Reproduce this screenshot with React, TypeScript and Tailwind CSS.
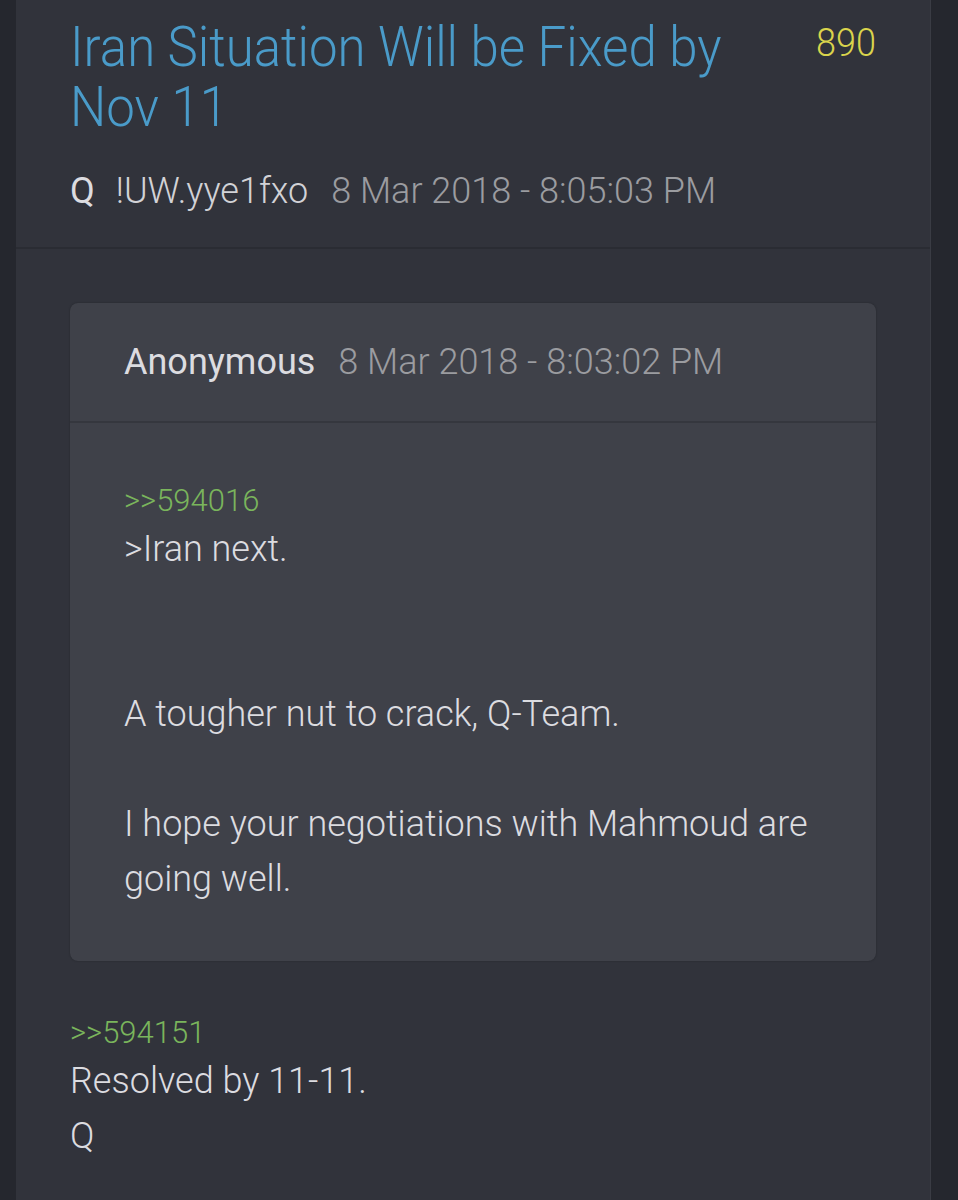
const quoteLines: string[] = [">Iran next.", "", "", "A tougher nut to crack, Q-Team.", "", "I hope your negotiations with Mahmoud are going well."];

const App = () => {
	return (
		<div className="w-[958px] h-[1200px] overflow-hidden bg-[#25272e] font-['Roboto',sans-serif] font-light">
			<div className="mx-[16px] w-[915px] h-full bg-[#31333b] border-r border-[#3a3c44]">
				<div className="flex justify-between px-[54px] pt-[17px] pb-[34px] border-b-2 border-[#2a2c33]">
					<div>
						<h1 className="w-[700px] text-[51px] leading-[56px] text-[#4a9bc9] scale-y-[1.08] origin-top">Iran Situation Will be Fixed by Nov 11</h1>
						<div className="flex items-baseline mt-[40px] text-[36px] leading-[44px]">
							<span className="font-normal text-[#dcdce0]">Q</span>
							<span className="ml-[21px] text-[#d2d2d6]">!UW.yye1fxo</span>
							<span className="ml-[23px] text-[#9b9ca0]">8 Mar 2018 - 8:05:03 PM</span>
						</div>
					</div>
					<span className="pt-[2px] text-[36px] leading-[44px] text-[#dad44c] scale-y-[1.08] origin-top">890</span>
				</div>

				<div className="px-[54px] pt-[54px]">
					<div className="rounded-[8px] bg-[#3f4149] shadow-[0_0_2px_rgba(0,0,0,0.3)]">
						<div className="flex items-baseline px-[54px] pt-[37px] pb-[37px] border-b-2 border-[#35373e] text-[36px] leading-[44px]">
							<span className="font-normal text-[#dcdce0]">Anonymous</span>
							<span className="ml-[23px] text-[#9b9ca0]">8 Mar 2018 - 8:03:02 PM</span>
						</div>
						<div className="px-[54px] pt-[63px] pb-[54px] text-[36px] leading-[55px] text-[#dcdce0]">
							<p className="text-[31px] leading-[30px] text-[#7ab55c] mb-[6px]">&gt;&gt;594016</p>
							{quoteLines.map((line, idx: number) => (
								<p key={idx} className="min-h-[55px]">{line}</p>
							))}
						</div>
					</div>

					<div className="pt-[57px] text-[36px] leading-[55px] text-[#dcdce0]">
						<p className="text-[31px] leading-[30px] text-[#7ab55c] mb-[6px]">&gt;&gt;594151</p>
						<p>Resolved by 11-11.</p>
						<p>Q</p>
					</div>
				</div>
			</div>
		</div>
	);
};

export default App;
